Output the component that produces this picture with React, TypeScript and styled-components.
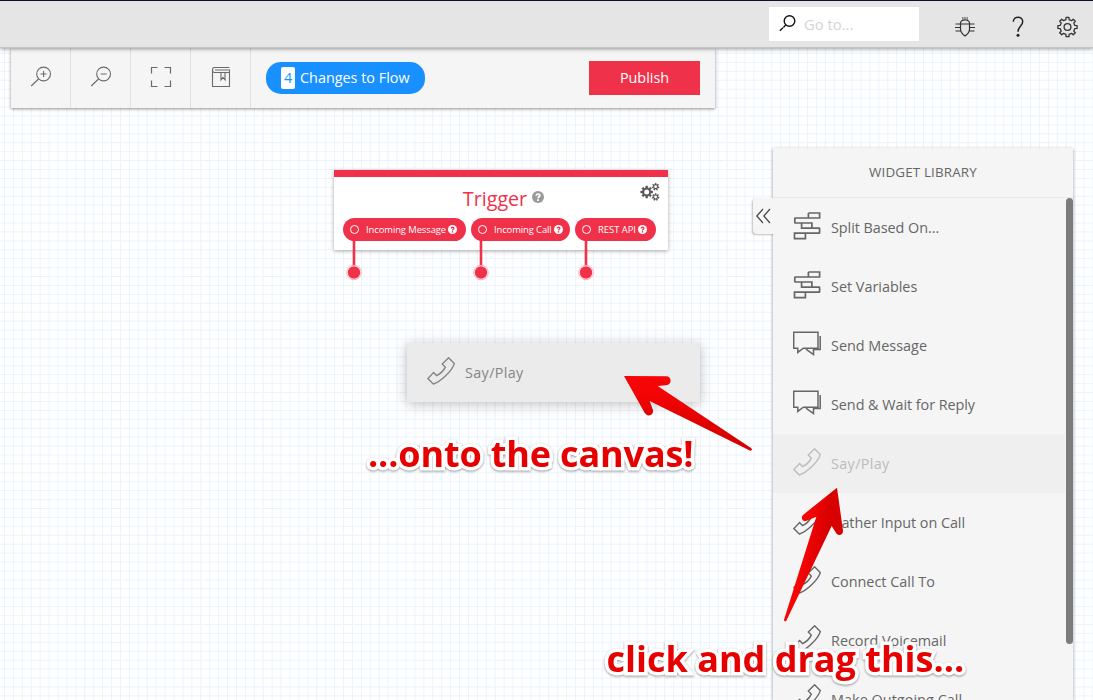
import React from "react";
import styled, { createGlobalStyle } from "styled-components";

const GlobalStyle = createGlobalStyle`
  * { box-sizing: border-box; }
  body { margin: 0; overflow: hidden; font-family: "Open Sans", sans-serif; color: #616161; }
  svg { display: block; flex: none; }
`;

const Page = styled.div`
  height: 700px;
  display: flex;
  flex-direction: column;
  overflow: hidden;
`;

const Header = styled.header`
  height: 48px;
  flex: none;
  position: relative;
  z-index: 5;
  display: flex;
  align-items: center;
  justify-content: flex-end;
  padding-right: 15px;
  background: #e5e5e5;
  border-top: 1px solid #0d122b;
  border-bottom: 1px solid #c4c4c4;
  box-shadow: 0 1px 4px rgba(0, 0, 0, 0.4);
`;

const Search = styled.div`
  width: 150px;
  height: 34px;
  display: flex;
  align-items: center;
  gap: 8px;
  padding-left: 10px;
  margin-right: 35px;
  background: #fff;
  color: #d4d4d4;
  font-size: 14.8px;
`;

const SearchText = styled.span`
  padding-bottom: 1px;
`;

const HeaderIcons = styled.div`
  display: flex;
  align-items: center;
  padding-top: 6px;
`;

const HeaderIcon = styled.div<{ $gap?: number }>`
  margin-right: ${(p) => p.$gap ?? 0}px;
`;

const Canvas = styled.main`
  position: relative;
  flex: 1;
  padding-left: 11px;
  background-color: #fff;
  background-image: linear-gradient(to right, #e8f4fe 1px, transparent 1px),
    linear-gradient(to bottom, #e8f4fe 1px, transparent 1px);
  background-size: 8.93px 8.93px;
  background-position: 4px 5px;
`;

const Toolbar = styled.div`
  width: 704px;
  height: 60px;
  display: flex;
  align-items: center;
  background: #f5f5f5;
  box-shadow: 0 1px 3px rgba(0, 0, 0, 0.45);
`;

const Tool = styled.div`
  width: 60px;
  height: 60px;
  display: flex;
  align-items: center;
  justify-content: center;
  padding-bottom: 2px;
  border-right: 1px solid #e0e0e0;
`;

const Changes = styled.div`
  width: 159px;
  height: 32px;
  display: flex;
  align-items: center;
  margin-left: 15px;
  padding-left: 15px;
  gap: 5px;
  border-radius: 15px;
  background: #1890ff;
  color: #fff;
  font-size: 14.4px;
  line-height: 20px;
  white-space: nowrap;
`;

const Count = styled.span`
  width: 14px;
  height: 22px;
  line-height: 21px;
  text-align: center;
  border-radius: 2px;
  background: #fff;
  color: #1890ff;
`;

const Publish = styled.div`
  width: 111px;
  height: 34px;
  line-height: 33px;
  margin-left: auto;
  margin-right: 15px;
  text-align: center;
  background: #f0314a;
  color: #fff;
  font-size: 14.4px;
`;

const TriggerNode = styled.section`
  position: absolute;
  left: 334px;
  top: 122px;
  width: 334px;
  height: 80px;
  padding: 9px 9px 0;
  background: #fff;
  border-top: 7px solid #f0314a;
  box-shadow: 0 1px 4px rgba(0, 0, 0, 0.35);
`;

const NodeTitle = styled.div`
  height: 24px;
  display: flex;
  align-items: center;
  justify-content: center;
  gap: 5px;
  padding-left: 5px;
  color: #f0314a;
  font-size: 19.7px;
  font-weight: 500;
`;

const TitleHelp = styled.span`
  padding-bottom: 2px;
`;

const GearSpot = styled.div`
  position: absolute;
  right: 8px;
  top: 5px;
`;

const Outlets = styled.div`
  display: flex;
  gap: 5px;
  margin-top: 8px;
`;

const Outlet = styled.div<{ $w: number }>`
  position: relative;
  width: ${(p) => p.$w}px;
  height: 23px;
  display: flex;
  align-items: center;
  padding-left: 7px;
  gap: 2px;
  border-radius: 12px;
  background: #f0314a;
  color: #fff;
  font-size: 9.4px;
  font-weight: 500;
  white-space: nowrap;
`;

const Ring = styled.span`
  width: 9px;
  height: 9px;
  margin-right: 5px;
  flex: none;
  border: 1.3px solid #fff;
  border-radius: 50%;
`;

const Connector = styled.div<{ $x: number }>`
  position: absolute;
  left: ${(p) => p.$x}px;
  top: 22px;
`;

const DragCard = styled.div`
  position: absolute;
  left: 407px;
  top: 295px;
  width: 293px;
  height: 59px;
  display: flex;
  align-items: center;
  gap: 10px;
  padding-left: 20px;
  background: #ebebeb;
  color: #858585;
  font-size: 14.4px;
  box-shadow: 0 2px 12px rgba(0, 0, 0, 0.25);
`;

const Library = styled.aside`
  position: absolute;
  left: 773px;
  top: 100px;
  bottom: 0;
  width: 300px;
  background: #f5f5f5;
  box-shadow: 0 1px 3px rgba(0, 0, 0, 0.4);
`;

const LibraryTitle = styled.div`
  height: 50px;
  line-height: 49px;
  text-align: center;
  border-bottom: 1px solid #e9e9e9;
  font-size: 13.4px;
  color: #666;
`;

const LibraryList = styled.div`
  height: 502px;
  padding-right: 8px;
  overflow: hidden;
`;

const Widget = styled.div<{ $active?: boolean }>`
  height: 59px;
  display: flex;
  align-items: center;
  gap: 10px;
  padding-left: 20px;
  font-size: 14.4px;
  color: ${(p) => (p.$active ? "#bcbcbc" : "#666")};
  background: ${(p) => (p.$active ? "#efefef" : "transparent")};
`;

const WidgetIcon = styled.span`
  flex: none;
  padding-bottom: 3px;
`;

const Label = styled.span<{ $ls?: number }>`
  letter-spacing: ${(p) => p.$ls ?? 0}px;
  white-space: nowrap;
`;

const Scrollbar = styled.div`
  position: absolute;
  right: 0;
  top: 50px;
  width: 7px;
  height: 446px;
  border-radius: 4px;
  background: #7c7c7c;
`;

const Collapse = styled.div`
  position: absolute;
  left: -20px;
  top: 50px;
  width: 21px;
  height: 36px;
  display: flex;
  align-items: center;
  padding-left: 3px;
  border-radius: 4px 0 0 4px;
  background: #f5f5f5;
  box-shadow: -1px 1px 2px rgba(0, 0, 0, 0.25);
  clip-path: inset(-4px 0 -4px -4px);
`;

const Annotation = styled.div<{ $x: number; $y: number; $ls: number }>`
  position: absolute;
  left: ${(p) => p.$x}px;
  top: ${(p) => p.$y}px;
  line-height: 48px;
  font-size: 36px;
  font-weight: 700;
  letter-spacing: ${(p) => p.$ls}px;
  white-space: nowrap;
  color: #e60000;
  -webkit-text-stroke: 7px #fff;
  paint-order: stroke fill;
  stroke-linejoin: round;
  filter: drop-shadow(0 1px 1px rgba(0, 0, 0, 0.4));
`;

const Arrow = styled.svg<{ $x: number; $y: number }>`
  position: absolute;
  left: ${(p) => p.$x}px;
  top: ${(p) => p.$y}px;
`;

const PhoneIcon = () => (
  <svg width="28" height="28" viewBox="0 0 28 28" fill="none" stroke="currentColor" strokeWidth="1.4">
    <path d="M21.6.8 15.3 7l3 3.1c-1.5 3.2-5.2 6.8-8.7 8.5l-3-3.2L.8 21.600l5.500 5.400C13.500 25 25 14 27.300 6.600Z" />
  </svg>
);

const MessageIcon = () => (
  <svg width="28" height="28" viewBox="0 0 28 28" fill="none" stroke="currentColor" strokeWidth="1.500">
    <path d="M.7 2.200h24.300v16H10.300l-5.500 4.200v-4.200H.7ZM27.200 6v13.600h-6.700v4.900l-7.600-5.300" />
  </svg>
);

const SplitIcon = () => (
  <svg width="28" height="28" viewBox="0 0 28 28" fill="none" stroke="currentColor" strokeWidth="1.700">
    <path d="M15.400 1h11.200v5H15.400M18.900 11H2.300q-.5 0-.5-.5v-4q0-.5.5-.5H15.400V1M8.600 11h10.300v5.200H8.600zM8.600 16.200h17.500q.5 0 .5.500v4q0 .5-.5.500H12.400M1.500 21.200h10.900v5.500H1.500z" />
  </svg>
);

const ZoomIcon = ({ plus }: { plus?: boolean }) => (
  <svg width="22" height="22" viewBox="0 0 22 22" fill="none" stroke="#6b6b6b" strokeWidth="1.1">
    <circle cx="13.600" cy="8" r="6.900" />
    <path d="m8.500 13-7.300 7M10.600 8h6" />
    {plus && <path d="M13.600 5v6" />}
  </svg>
);

const HelpDot = ({ size, bg, fg }: { size: number; bg: string; fg: string }) => (
  <svg width={size} height={size} viewBox="0 0 12 12">
    <circle cx="6" cy="6" r="6" fill={bg} />
    <path d="M4.2 4.700C4.300 2.400 7.900 2.500 7.800 4.600 7.700 5.800 6 5.800 6 7.300" fill="none" stroke={fg} strokeWidth="1.7" />
    <rect x="5.100" y="8.200" width="1.800" height="1.800" fill={fg} />
  </svg>
);

const gearPath = (cx: number, cy: number, r: number, R: number, n: number) => {
  const pts: string[] = [];
  for (let i = 0; i < n; i++) {
    const a = (i / n) * Math.PI * 2 - Math.PI / 2;
    const s = (Math.PI * 2) / n;
    [[-0.27, r], [-0.19, R], [0.19, R], [0.27, r]].forEach(([k, d]) =>
      pts.push(`${(cx + Math.cos(a + k * s) * d).toFixed(2)} ${(cy + Math.sin(a + k * s) * d).toFixed(2)}`)
    );
  }
  return `M${pts.join("L")}Z`;
};

const GearsIcon = () => (
  <svg width="20" height="20" viewBox="0 0 20 20" fill="none" stroke="#555">
    <path d={gearPath(6.7, 10, 4.3, 6, 8)} fill="#555" stroke="#555" strokeWidth=".6" />
    <circle cx="6.7" cy="10" r="2.5" fill="#fff" stroke="none" />
    <path d={gearPath(15.6, 4.7, 2.4, 3.6, 7)} fill="#555" strokeWidth=".4" />
    <circle cx="15.6" cy="4.7" r="1.4" fill="#fff" stroke="none" />
    <path d={gearPath(15.6, 15, 2.4, 3.6, 7)} fill="#555" strokeWidth=".4" />
    <circle cx="15.6" cy="15" r="1.4" fill="#fff" stroke="none" />
  </svg>
);

const widgets = [
  { name: "Split Based On...", icon: <SplitIcon />, ls: -0.05 },
  { name: "Set Variables", icon: <SplitIcon />, ls: 0 },
  { name: "Send Message", icon: <MessageIcon />, ls: 0 },
  { name: "Send & Wait for Reply", icon: <MessageIcon />, ls: -0.05 },
  { name: "Say/Play", icon: <PhoneIcon />, ls: 0.35, active: true },
  { name: "Gather Input on Call", icon: <PhoneIcon />, ls: -0.05 },
  { name: "Connect Call To", icon: <PhoneIcon />, ls: 0 },
  { name: "Record Voicemail", icon: <PhoneIcon />, ls: 0 },
  { name: "Make Outgoing Call", icon: <PhoneIcon />, ls: 0.05 },
];

const outlets = [
  { name: "Incoming Message", w: 123, x: 3, ls: -0.06 },
  { name: "Incoming Call", w: 99, x: 2, ls: -0.08 },
  { name: "REST API", w: 81, x: 3, ls: 0 },
];

export default function App() {
  return (
    <Page>
      <GlobalStyle />
      <Header>
        <Search>
          <svg width="17" height="18" viewBox="0 0 17 18" fill="none" stroke="#111" strokeWidth="1.4">
            <circle cx="10.5" cy="6" r="5.3" />
            <path d="m6.7 10.100-2.300 2.300M4 12.700l-3.200 3" />
          </svg>
          <SearchText>Go to...</SearchText>
        </Search>
        <HeaderIcons>
          <HeaderIcon $gap={36}>
            <svg width="22" height="22" viewBox="0 0 22 22" fill="none" stroke="#333" strokeWidth="1.2">
              <path d="M8.700 1v3M10.200 1v3M11.800 1v3M13.300 1v3" strokeWidth=".9" stroke="#666" />
              <path d="M6.500 7.300C6.500 5 8.500 4 11 4s4.500 1 4.500 3.300v6c0 2.700-2 4.900-4.500 6.700-2.500-1.800-4.500-4-4.500-6.700ZM1.500 8h19M1 11.500h5.500M15.500 11.500H21M1.500 15h5M15.500 15h5" />
            </svg>
          </HeaderIcon>
          <HeaderIcon $gap={33}>
            <svg width="12" height="22" viewBox="0 0 12 22" fill="none" stroke="#222" strokeWidth="1.5">
              <path d="M1.300 5.800C1.400-.2 10.700-.2 10.700 5.800c0 4-4.700 4.700-4.700 10" />
              <circle cx="6" cy="19.200" r="1.500" fill="#222" stroke="none" />
            </svg>
          </HeaderIcon>
          <HeaderIcon>
            <svg width="21" height="22" viewBox="0.500 0 21 22" fill="none" stroke="#333" strokeWidth="1.300" strokeLinejoin="round">
              <path d={gearPath(11, 11, 7.5, 9.7, 8)} />
              <circle cx="11" cy="11" r="3.400" />
            </svg>
          </HeaderIcon>
        </HeaderIcons>
      </Header>

      <Canvas>
        <Toolbar>
          <Tool><ZoomIcon plus /></Tool>
          <Tool><ZoomIcon /></Tool>
          <Tool>
            <svg width="22" height="22" viewBox="0 0 22 22" fill="none" stroke="#6b6b6b" strokeWidth="1.200">
              <path d="M1.500 7.500v-6h6M14.500 1.500h6v6M20.500 14.500v6h-6M7.500 20.500h-6v-6" />
            </svg>
          </Tool>
          <Tool>
            <svg width="20" height="22" viewBox="0 0 20 22" fill="none" stroke="#6b6b6b" strokeWidth="1.100">
              <path d="M18.500 1.500H3.500Q1.500 1.500 1.500 4v16.500h17V6.500H3.500Q1.500 6.500 1.500 4M4 4h14.500v2.500M10 6.500v7.500l2-2.500 2 2.500V6.500" />
            </svg>
          </Tool>
          <Changes>
            <Count>4</Count>
            <Label>Changes to Flow</Label>
          </Changes>
          <Publish>Publish</Publish>
        </Toolbar>

        <TriggerNode>
          <NodeTitle>
            <Label>Trigger</Label>
            <TitleHelp><HelpDot size={12} bg="#999" fg="#fff" /></TitleHelp>
          </NodeTitle>
          <GearSpot><GearsIcon /></GearSpot>
          <Outlets>
            {outlets.map((o) => (
              <Outlet key={o.name} $w={o.w}>
                <Ring />
                <Label $ls={o.ls}>{o.name}</Label>
                <HelpDot size={9} bg="#fff" fg="#f0314a" />
                <Connector $x={o.x}>
                  <svg width="16" height="41" viewBox="0 0 16 41">
                    <path d="M8 0v32" stroke="#f0314a" strokeWidth="2.600" />
                    <circle cx="8" cy="32.500" r="7.300" fill="#fff" stroke="#f58d9a" strokeWidth=".7" />
                    <circle cx="8" cy="32.500" r="6.200" fill="#f0314a" />
                  </svg>
                </Connector>
              </Outlet>
            ))}
          </Outlets>
        </TriggerNode>

        <DragCard>
          <WidgetIcon><PhoneIcon /></WidgetIcon>
          <Label $ls={0.35}>Say/Play</Label>
        </DragCard>

        <Library>
          <LibraryTitle><Label $ls={0.15}>WIDGET LIBRARY</Label></LibraryTitle>
          <LibraryList>
            {widgets.map((w) => (
              <Widget key={w.name} $active={w.active}>
                <WidgetIcon>{w.icon}</WidgetIcon>
                <Label $ls={w.ls}>{w.name}</Label>
              </Widget>
            ))}
          </LibraryList>
          <Scrollbar />
          <Collapse>
            <svg width="15" height="16" viewBox="0 0 15 16" fill="none" stroke="#444" strokeWidth="1.200">
              <path d="M7 1 .8 8 7 15M14 1 7.800 8 14 15" />
            </svg>
          </Collapse>
        </Library>

        <Arrow $x={620} $y={324} width="134" height="84" viewBox="690 126 402 252">
          <defs>
            <linearGradient id="shadeA" x1="0" y1="1" x2=".25" y2="0">
              <stop offset=".35" stopColor="#d80000" />
              <stop offset=".8" stopColor="#f50505" />
            </linearGradient>
          </defs>
          <path d="M702 138 828 139C846 139 847 165 828 166L803 168 1083 354Q1090 360 1081 362L779 213 789 240C792 258 770 262 763 247Z" fill="url(#shadeA)" />
        </Arrow>
        <Arrow $x={780} $y={436} width="66" height="140" viewBox="120 12 198 420">
          <defs>
            <linearGradient id="shadeB" x1="0" y1="0" x2="1" y2=".35">
              <stop offset=".45" stopColor="#f50505" />
              <stop offset=".75" stopColor="#d80000" />
            </linearGradient>
          </defs>
          <path d="M291 23 309 152C309 168 291 168 287 157L275 138 139 422Q133 428 132 419L229 110 200 122C186 127 181 112 190 104Z" fill="url(#shadeB)" />
        </Arrow>
        <Annotation $x={368} $y={382} $ls={-0.15}>...onto the canvas!</Annotation>
        <Annotation $x={606.5} $y={587} $ls={0}>click and drag this...</Annotation>
      </Canvas>
    </Page>
  );
}
